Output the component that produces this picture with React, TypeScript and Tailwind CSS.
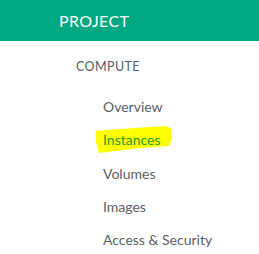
import React from 'react';

const items = ['Overview', 'Instances', 'Volumes', 'Images', 'Access & Security'];

const App: React.FC = () => {
  return (
    <div className="w-[259px] h-[254px] bg-white overflow-hidden font-['Lato',sans-serif]">
      <div className="h-[41px] bg-[#01a982] flex items-center pl-[59px]">
        <span className="text-white text-[16px] font-normal tracking-[0.4px]">PROJECT</span>
      </div>
      <div className="pl-[76px] pt-[16px] text-[12.5px] leading-[19px] text-[#555d66] tracking-[0.4px]">COMPUTE</div>
      <ul className="pl-[103px] pt-[23px] flex flex-col gap-[17.25px]">
        {items.map((item) => (
          <li key={item} className="h-[16px] leading-[16px] text-[14px] text-[#5a5f66]">
            {item === 'Instances' ? (
              <span className="relative inline-block text-[#2a9a2a]">
                <svg className="absolute left-[-8px] top-[-7px]" width="78" height="30" viewBox="0 0 78 30">
                  <path d="M1 6 L25 4 L55 2 L72 1 L76 4 L77 14 L74 21 L45 23 L4 28 L1 17 Z" fill="#ffff00" />
                </svg>
                <span className="relative">{item}</span>
              </span>
            ) : (
              item
            )}
          </li>
        ))}
      </ul>
    </div>
  );
};

export default App;
